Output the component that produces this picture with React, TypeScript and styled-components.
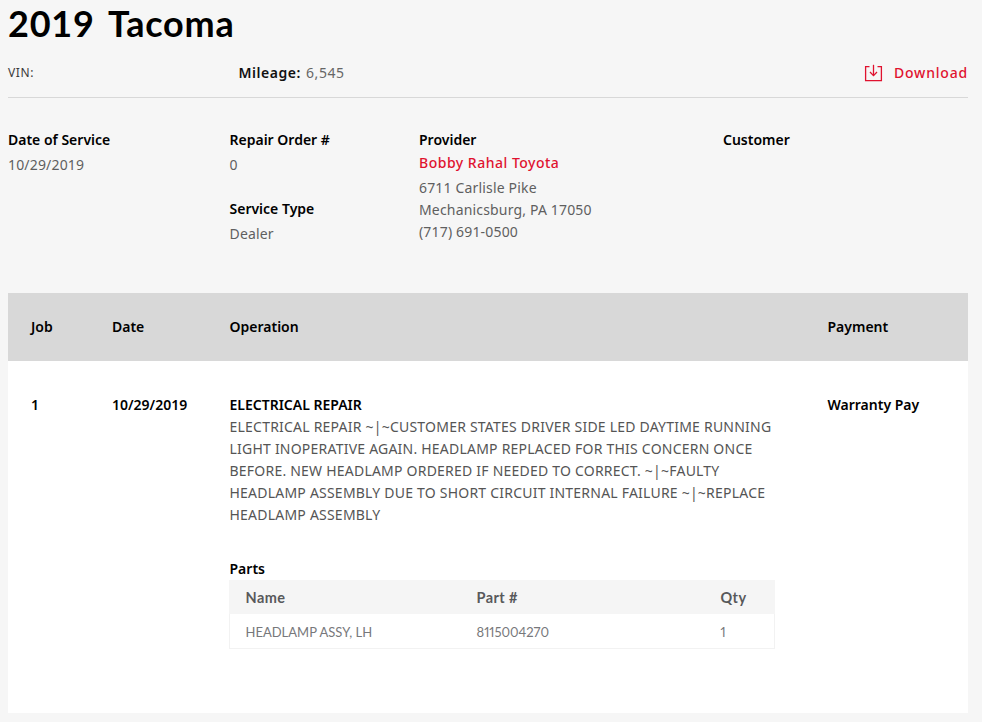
import React from "react";
import styled, { createGlobalStyle } from "styled-components";

const Global = createGlobalStyle`
  html, body { margin: 0; padding: 0; background: #f6f6f6; }
  body { font-family: "Noto Sans", "Liberation Sans", sans-serif; color: #000; }
`;

const Page = styled.div`
  box-sizing: border-box;
  width: 982px;
  height: 722px;
  padding: 0 14px 9px 8px;
  overflow: hidden;
  display: flex;
  flex-direction: column;
`;
const Title = styled.h1`
  margin: 0;
  height: 48px;
  font: 700 36px/46px "Lato", sans-serif;
  word-spacing: 5px;
  letter-spacing: 0.75px;
  color: #000;
`;
const Summary = styled.div`
  display: grid;
  grid-template-columns: 230.5px 1fr auto;
  align-items: center;
  height: 49px;
  border-bottom: 1px solid #d8d8d8;
`;
const Vin = styled.span`
  font-size: 12px;
  letter-spacing: 0.6px;
  color: #3a3a3a;
`;
const Mileage = styled.span`
  font-size: 14px;
  letter-spacing: 0.55px;
  color: #666;
`;
const Strong = styled.b`
  font-weight: 600;
  color: #111;
  margin-right: 5px;
`;
const Download = styled.a`
  display: flex;
  align-items: center;
  gap: 11px;
  font-size: 14px;
  font-weight: 500;
  letter-spacing: 0.8px;
  color: #e0122f;
`;
const Info = styled.section`
  display: grid;
  grid-template-columns: 221.5px 189.5px 304px 1fr;
  height: 195px;
  padding-top: 31px;
  box-sizing: border-box;
`;
const Column = styled.div`
  display: flex;
  flex-direction: column;
`;
const Label = styled.div<{ $gap?: number }>`
  font-size: 14px;
  line-height: 22px;
  font-weight: 600;
  color: #000;
  margin-top: ${(p) => p.$gap ?? 0}px;
`;
const Value = styled.div<{ $gap?: number }>`
  font-size: 14px;
  line-height: 22px;
  letter-spacing: 0.17px;
  color: #5f5f5f;
  margin-top: ${(p) => p.$gap ?? 0}px;
`;
const ProviderName = styled.div`
  font-size: 14px;
  line-height: 22px;
  font-weight: 500;
  letter-spacing: 0.5px;
  color: #e0122f;
  margin: 1px 0 3px;
`;
const JobCard = styled.section`
  flex: 1;
  background: #fff;
`;
const JobGrid = styled.div`
  display: grid;
  grid-template-columns: 81px 117.5px 598px 1fr;
  padding-left: 23px;
`;
const JobHeader = styled(JobGrid)`
  box-sizing: border-box;
  height: 68px;
  padding-bottom: 1px;
  align-items: center;
  background: #d8d8d8;
  font-size: 14px;
  font-weight: 600;
  color: #000;
`;
const JobRow = styled(JobGrid)`
  padding-top: 33px;
`;
const Cell = styled.div`
  font-size: 14px;
  line-height: 22px;
  font-weight: 600;
  color: #000;
`;
const Description = styled.div`
  font-size: 14px;
  line-height: 22px;
  letter-spacing: 0.22px;
  color: #555;
  width: 546px;
`;
const OperationTitle = styled.div`
  font-size: 14px;
  line-height: 22px;
  font-weight: 600;
  color: #000;
`;
const PartsLabel = styled.div`
  margin-top: 32px;
  font-size: 14px;
  line-height: 22px;
  font-weight: 600;
  color: #000;
`;
const PartsTable = styled.div`
  width: 546px;
  margin-left: -1px;
  border: 1px solid #f2f2f2;
  border-top: 0;
  box-sizing: border-box;
`;
const PartsGrid = styled.div`
  display: grid;
  grid-template-columns: 231px 244px 1fr;
  padding-left: 16px;
  height: 34px;
  align-items: center;
  font-family: "Lato", sans-serif;
`;
const PartsHead = styled(PartsGrid)`
  background: #f5f5f5;
  font-size: 14.5px;
  letter-spacing: 0.4px;
  font-weight: 700;
  color: #58595b;
  margin: 0 -1px;
  padding-left: 17px;
`;
const PartsRow = styled(PartsGrid)`
  box-sizing: border-box;
  padding-top: 2px;
  font-size: 13px;
  font-variant-numeric: proportional-nums;
  color: #77787b;
`;

const DownloadIcon = () => (
  <svg width="19" height="18" viewBox="0 0 19 18" fill="none" stroke="#e0122f" strokeWidth="1.3">
    <path d="M5.5 2.6H1.6V16.6H17.4V2.6H13.5" />
    <path d="M9.5 0.8V11.4" />
    <path d="M6 8L9.5 11.6L13 8" />
  </svg>
);

export default function App() {
  return (
    <Page>
      <Global />
      <Title>2019 Tacoma</Title>
      <Summary>
        <Vin>VIN:</Vin>
        <Mileage>
          <Strong>Mileage:</Strong>6,545
        </Mileage>
        <Download>
          <DownloadIcon />
          Download
        </Download>
      </Summary>
      <Info>
        <Column>
          <Label>Date of Service</Label>
          <Value $gap={3}>10/29/2019</Value>
        </Column>
        <Column>
          <Label>Repair Order #</Label>
          <Value $gap={3}>0</Value>
          <Label $gap={22}>Service Type</Label>
          <Value $gap={3}>Dealer</Value>
        </Column>
        <Column>
          <Label>Provider</Label>
          <ProviderName>Bobby Rahal Toyota</ProviderName>
          <Value>6711 Carlisle Pike</Value>
          <Value>Mechanicsburg, PA 17050</Value>
          <Value>(717) 691-0500</Value>
        </Column>
        <Column>
          <Label>Customer</Label>
        </Column>
      </Info>
      <JobCard>
        <JobHeader>
          <div>Job</div>
          <div>Date</div>
          <div>Operation</div>
          <div>Payment</div>
        </JobHeader>
        <JobRow>
          <Cell>1</Cell>
          <Cell>10/29/2019</Cell>
          <div>
            <OperationTitle>ELECTRICAL REPAIR</OperationTitle>
            <Description>
              ELECTRICAL REPAIR ~|~CUSTOMER STATES DRIVER SIDE LED DAYTIME RUNNING LIGHT INOPERATIVE AGAIN. HEADLAMP
              REPLACED FOR THIS CONCERN ONCE BEFORE. NEW HEADLAMP ORDERED IF NEEDED TO CORRECT. ~|~FAULTY HEADLAMP
              ASSEMBLY DUE TO SHORT CIRCUIT INTERNAL FAILURE ~|~REPLACE HEADLAMP ASSEMBLY
            </Description>
            <PartsLabel>Parts</PartsLabel>
            <PartsTable>
              <PartsHead>
                <div>Name</div>
                <div>Part #</div>
                <div>Qty</div>
              </PartsHead>
              <PartsRow>
                <div>HEADLAMP ASSY, LH</div>
                <div>8115004270</div>
                <div>1</div>
              </PartsRow>
            </PartsTable>
          </div>
          <Cell>Warranty Pay</Cell>
        </JobRow>
      </JobCard>
    </Page>
  );
}
